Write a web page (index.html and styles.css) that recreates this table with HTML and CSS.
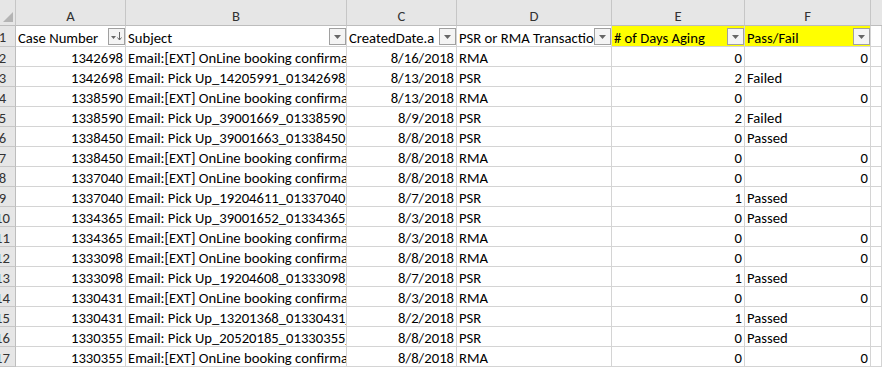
FILE: index.html
```html
<!DOCTYPE html>
<html>
<head>
<meta charset="utf-8">
<link rel="stylesheet" href="styles.css">
</head>
<body>
<div class="sheet">
  <div class="ch corner"><svg width="10" height="10" viewBox="0 0 10 10"><polygon points="10,0 10,10 0,10" fill="#b4b4b4"/></svg></div>
  <div class="ch">A</div><div class="ch">B</div><div class="ch">C</div><div class="ch">D</div><div class="ch">E</div><div class="ch">F</div><div class="ch last"></div>

  <div class="rh">1</div>
  <div class="c hd"><span class="t">Case Number</span><span class="fb"><svg width="15" height="15" viewBox="0 0 15 15"><path d="M2 7h5l-2.5 3z" fill="#666"/><path d="M10.5 3v8" stroke="#666" stroke-width="1"/><path d="M8.5 8.5l2 2.5 2-2.5" stroke="#666" stroke-width="1" fill="none"/></svg></span></div>
  <div class="c hd"><span class="t">Subject</span><span class="fb"><svg width="15" height="15" viewBox="0 0 15 15"><path d="M4 6h7l-3.5 4z" fill="#666"/></svg></span></div>
  <div class="c hd"><span class="t">CreatedDate.a</span><span class="fb"><svg width="15" height="15" viewBox="0 0 15 15"><path d="M4 6h7l-3.5 4z" fill="#666"/></svg></span></div>
  <div class="c hd"><span class="t">PSR or RMA Transaction</span><span class="fb"><svg width="15" height="15" viewBox="0 0 15 15"><path d="M4 6h7l-3.5 4z" fill="#666"/></svg></span></div>
  <div class="c hd yellow"><span class="t"># of Days Aging</span><span class="fb"><svg width="15" height="15" viewBox="0 0 15 15"><path d="M4 6h7l-3.5 4z" fill="#666"/></svg></span></div>
  <div class="c hd yellow"><span class="t">Pass/Fail</span><span class="fb"><svg width="15" height="15" viewBox="0 0 15 15"><path d="M4 6h7l-3.5 4z" fill="#666"/></svg></span></div>
  <div class="c"></div>

  <div class="rh">2</div><div class="c n">1342698</div><div class="c">Email:[EXT] OnLine booking confirmation</div><div class="c n">8/16/2018</div><div class="c">RMA</div><div class="c n">0</div><div class="c n">0</div><div class="c"></div>
  <div class="rh">3</div><div class="c n">1342698</div><div class="c">Email: Pick Up_14205991_01342698_</div><div class="c n">8/13/2018</div><div class="c">PSR</div><div class="c n">2</div><div class="c">Failed</div><div class="c"></div>
  <div class="rh">4</div><div class="c n">1338590</div><div class="c">Email:[EXT] OnLine booking confirmation</div><div class="c n">8/13/2018</div><div class="c">RMA</div><div class="c n">0</div><div class="c n">0</div><div class="c"></div>
  <div class="rh">5</div><div class="c n">1338590</div><div class="c">Email: Pick Up_39001669_01338590_</div><div class="c n">8/9/2018</div><div class="c">PSR</div><div class="c n">2</div><div class="c">Failed</div><div class="c"></div>
  <div class="rh">6</div><div class="c n">1338450</div><div class="c">Email: Pick Up_39001663_01338450_</div><div class="c n">8/8/2018</div><div class="c">PSR</div><div class="c n">0</div><div class="c">Passed</div><div class="c"></div>
  <div class="rh">7</div><div class="c n">1338450</div><div class="c">Email:[EXT] OnLine booking confirmation</div><div class="c n">8/8/2018</div><div class="c">RMA</div><div class="c n">0</div><div class="c n">0</div><div class="c"></div>
  <div class="rh">8</div><div class="c n">1337040</div><div class="c">Email:[EXT] OnLine booking confirmation</div><div class="c n">8/8/2018</div><div class="c">RMA</div><div class="c n">0</div><div class="c n">0</div><div class="c"></div>
  <div class="rh">9</div><div class="c n">1337040</div><div class="c">Email: Pick Up_19204611_01337040_</div><div class="c n">8/7/2018</div><div class="c">PSR</div><div class="c n">1</div><div class="c">Passed</div><div class="c"></div>
  <div class="rh">10</div><div class="c n">1334365</div><div class="c">Email: Pick Up_39001652_01334365_</div><div class="c n">8/3/2018</div><div class="c">PSR</div><div class="c n">0</div><div class="c">Passed</div><div class="c"></div>
  <div class="rh">11</div><div class="c n">1334365</div><div class="c">Email:[EXT] OnLine booking confirmation</div><div class="c n">8/3/2018</div><div class="c">RMA</div><div class="c n">0</div><div class="c n">0</div><div class="c"></div>
  <div class="rh">12</div><div class="c n">1333098</div><div class="c">Email:[EXT] OnLine booking confirmation</div><div class="c n">8/8/2018</div><div class="c">RMA</div><div class="c n">0</div><div class="c n">0</div><div class="c"></div>
  <div class="rh">13</div><div class="c n">1333098</div><div class="c">Email: Pick Up_19204608_01333098_</div><div class="c n">8/7/2018</div><div class="c">PSR</div><div class="c n">1</div><div class="c">Passed</div><div class="c"></div>
  <div class="rh">14</div><div class="c n">1330431</div><div class="c">Email:[EXT] OnLine booking confirmation</div><div class="c n">8/3/2018</div><div class="c">RMA</div><div class="c n">0</div><div class="c n">0</div><div class="c"></div>
  <div class="rh">15</div><div class="c n">1330431</div><div class="c">Email: Pick Up_13201368_01330431_</div><div class="c n">8/2/2018</div><div class="c">PSR</div><div class="c n">1</div><div class="c">Passed</div><div class="c"></div>
  <div class="rh">16</div><div class="c n">1330355</div><div class="c">Email: Pick Up_20520185_01330355_</div><div class="c n">8/8/2018</div><div class="c">PSR</div><div class="c n">0</div><div class="c">Passed</div><div class="c"></div>
  <div class="rh">17</div><div class="c n">1330355</div><div class="c">Email:[EXT] OnLine booking confirmation</div><div class="c n">8/8/2018</div><div class="c">RMA</div><div class="c n">0</div><div class="c n">0</div><div class="c"></div>
</div>
</body>
</html>
```

FILE: styles.css
```css
html, body {
  margin: 0;
  padding: 0;
  background: #ffffff;
  overflow: hidden;
}

.sheet {
  display: grid;
  grid-template-columns: 26px 110px 221px 110px 155px 133px 126px 1fr;
  grid-template-rows: 26px 21px;
  grid-auto-rows: 20px;
  margin-left: -10px;
  width: 892px;
  font-family: Carlito, Calibri, "Liberation Sans", sans-serif;
  font-size: 14.67px;
  color: #000;
}

.sheet > div {
  box-sizing: border-box;
  overflow: hidden;
  white-space: nowrap;
}

.ch {
  background: #e6e6e6;
  border-right: 1px solid #c6c6c6;
  border-bottom: 1px solid #bdbdbd;
  text-align: center;
  line-height: 15px;
  padding-top: 9px;
  color: #333;
}

.ch.last {
  border-right: none;
}

.corner {
  display: flex;
  justify-content: flex-end;
  align-items: flex-end;
  padding: 0 2px 3px 0;
}

.rh {
  background: #e6e6e6;
  border-right: 1px solid #bdbdbd;
  border-bottom: 1px solid #c6c6c6;
  text-align: center;
  line-height: 15px;
  padding-top: 4px;
  color: #333;
}

.c {
  border-right: 1px solid #d4d4d4;
  border-bottom: 1px solid #d4d4d4;
  padding: 4px 2px 0 2px;
  line-height: 15px;
}

.c.n {
  text-align: right;
}

.hd {
  display: flex;
  align-items: flex-start;
  padding: 0 0 0 2px;
}

.hd .t {
  flex: 1;
  min-width: 0;
  overflow: hidden;
  padding-top: 5px;
}

.yellow {
  background: #ffff00;
}

.fb {
  flex-shrink: 0;
  width: 17px;
  height: 17px;
  box-sizing: border-box;
  margin-top: 2px;
  border: 1px solid #a0a0a0;
  background: #f4f4f4;
  display: flex;
}
```
